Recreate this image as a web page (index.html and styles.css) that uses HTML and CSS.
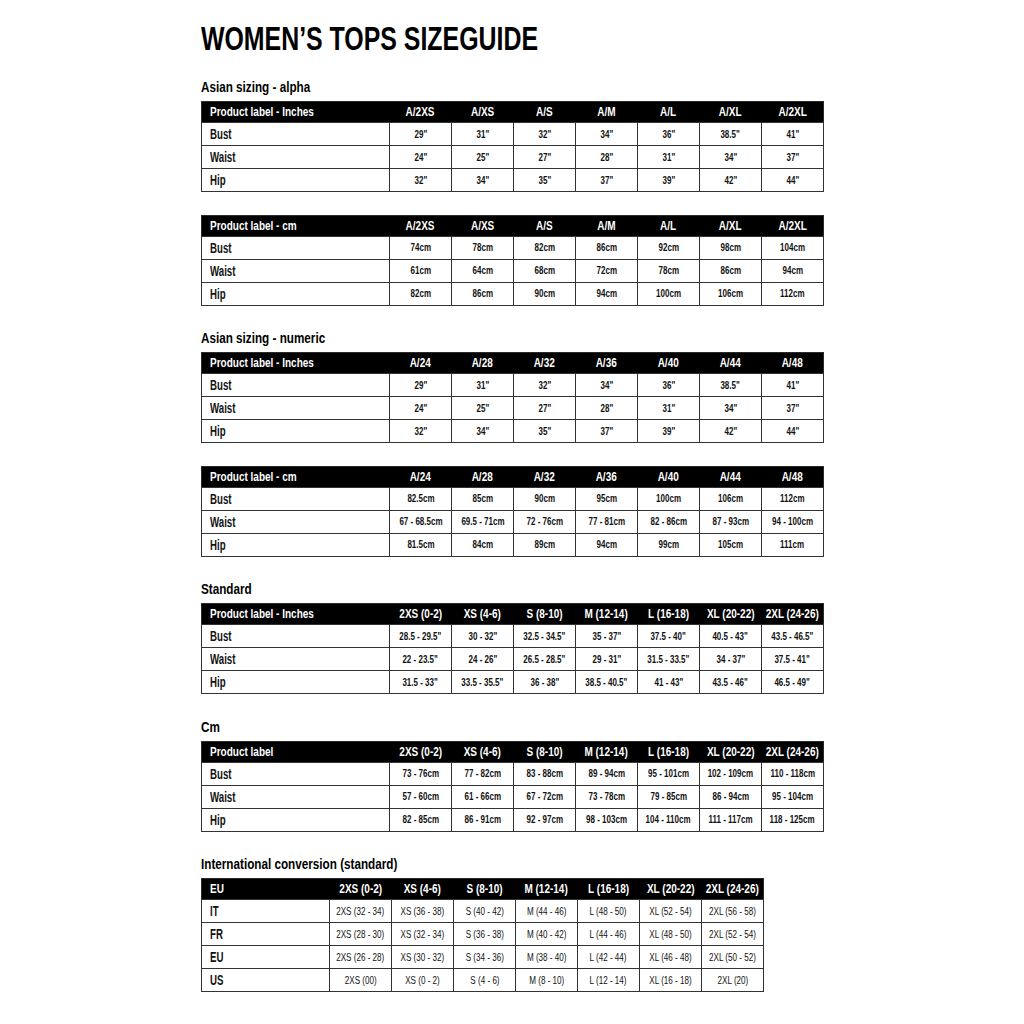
FILE: index.html
```html
<!DOCTYPE html>
<html>
<head>
<meta charset="utf-8">
<link rel="stylesheet" href="styles.css">
</head>
<body>
<div class="page">
  <h1 class="title"><span>WOMEN’S TOPS SIZEGUIDE</span></h1>

  <h2 class="section first"><span>Asian sizing - alpha</span></h2>
  <table class="chart">
    <tr class="head"><th class="label"><span>Product label - Inches</span></th><th><span>A/2XS</span></th><th><span>A/XS</span></th><th><span>A/S</span></th><th><span>A/M</span></th><th><span>A/L</span></th><th><span>A/XL</span></th><th><span>A/2XL</span></th></tr>
    <tr><td class="label"><span>Bust</span></td><td><span>29"</span></td><td><span>31"</span></td><td><span>32"</span></td><td><span>34"</span></td><td><span>36"</span></td><td><span>38.5"</span></td><td><span>41"</span></td></tr>
    <tr><td class="label"><span>Waist</span></td><td><span>24"</span></td><td><span>25"</span></td><td><span>27"</span></td><td><span>28"</span></td><td><span>31"</span></td><td><span>34"</span></td><td><span>37"</span></td></tr>
    <tr><td class="label"><span>Hip</span></td><td><span>32"</span></td><td><span>34"</span></td><td><span>35"</span></td><td><span>37"</span></td><td><span>39"</span></td><td><span>42"</span></td><td><span>44"</span></td></tr>
  </table>
  <table class="chart spaced">
    <tr class="head"><th class="label"><span>Product label - cm</span></th><th><span>A/2XS</span></th><th><span>A/XS</span></th><th><span>A/S</span></th><th><span>A/M</span></th><th><span>A/L</span></th><th><span>A/XL</span></th><th><span>A/2XL</span></th></tr>
    <tr><td class="label"><span>Bust</span></td><td><span>74cm</span></td><td><span>78cm</span></td><td><span>82cm</span></td><td><span>86cm</span></td><td><span>92cm</span></td><td><span>98cm</span></td><td><span>104cm</span></td></tr>
    <tr><td class="label"><span>Waist</span></td><td><span>61cm</span></td><td><span>64cm</span></td><td><span>68cm</span></td><td><span>72cm</span></td><td><span>78cm</span></td><td><span>86cm</span></td><td><span>94cm</span></td></tr>
    <tr><td class="label"><span>Hip</span></td><td><span>82cm</span></td><td><span>86cm</span></td><td><span>90cm</span></td><td><span>94cm</span></td><td><span>100cm</span></td><td><span>106cm</span></td><td><span>112cm</span></td></tr>
  </table>

  <h2 class="section"><span>Asian sizing - numeric</span></h2>
  <table class="chart">
    <tr class="head"><th class="label"><span>Product label - Inches</span></th><th><span>A/24</span></th><th><span>A/28</span></th><th><span>A/32</span></th><th><span>A/36</span></th><th><span>A/40</span></th><th><span>A/44</span></th><th><span>A/48</span></th></tr>
    <tr><td class="label"><span>Bust</span></td><td><span>29"</span></td><td><span>31"</span></td><td><span>32"</span></td><td><span>34"</span></td><td><span>36"</span></td><td><span>38.5"</span></td><td><span>41"</span></td></tr>
    <tr><td class="label"><span>Waist</span></td><td><span>24"</span></td><td><span>25"</span></td><td><span>27"</span></td><td><span>28"</span></td><td><span>31"</span></td><td><span>34"</span></td><td><span>37"</span></td></tr>
    <tr><td class="label"><span>Hip</span></td><td><span>32"</span></td><td><span>34"</span></td><td><span>35"</span></td><td><span>37"</span></td><td><span>39"</span></td><td><span>42"</span></td><td><span>44"</span></td></tr>
  </table>
  <table class="chart spaced">
    <tr class="head"><th class="label"><span>Product label - cm</span></th><th><span>A/24</span></th><th><span>A/28</span></th><th><span>A/32</span></th><th><span>A/36</span></th><th><span>A/40</span></th><th><span>A/44</span></th><th><span>A/48</span></th></tr>
    <tr><td class="label"><span>Bust</span></td><td><span>82.5cm</span></td><td><span>85cm</span></td><td><span>90cm</span></td><td><span>95cm</span></td><td><span>100cm</span></td><td><span>106cm</span></td><td><span>112cm</span></td></tr>
    <tr><td class="label"><span>Waist</span></td><td><span>67 - 68.5cm</span></td><td><span>69.5 - 71cm</span></td><td><span>72 - 76cm</span></td><td><span>77 - 81cm</span></td><td><span>82 - 86cm</span></td><td><span>87 - 93cm</span></td><td><span>94 - 100cm</span></td></tr>
    <tr><td class="label"><span>Hip</span></td><td><span>81.5cm</span></td><td><span>84cm</span></td><td><span>89cm</span></td><td><span>94cm</span></td><td><span>99cm</span></td><td><span>105cm</span></td><td><span>111cm</span></td></tr>
  </table>

  <h2 class="section"><span>Standard</span></h2>
  <table class="chart">
    <tr class="head"><th class="label"><span>Product label - Inches</span></th><th><span>2XS (0-2)</span></th><th><span>XS (4-6)</span></th><th><span>S (8-10)</span></th><th><span>M (12-14)</span></th><th><span>L (16-18)</span></th><th><span>XL (20-22)</span></th><th><span>2XL (24-26)</span></th></tr>
    <tr><td class="label"><span>Bust</span></td><td><span>28.5 - 29.5"</span></td><td><span>30 - 32"</span></td><td><span>32.5 - 34.5"</span></td><td><span>35 - 37"</span></td><td><span>37.5 - 40"</span></td><td><span>40.5 - 43"</span></td><td><span>43.5 - 46.5"</span></td></tr>
    <tr><td class="label"><span>Waist</span></td><td><span>22 - 23.5"</span></td><td><span>24 - 26"</span></td><td><span>26.5 - 28.5"</span></td><td><span>29 - 31"</span></td><td><span>31.5 - 33.5"</span></td><td><span>34 - 37"</span></td><td><span>37.5 - 41"</span></td></tr>
    <tr><td class="label"><span>Hip</span></td><td><span>31.5 - 33"</span></td><td><span>33.5 - 35.5"</span></td><td><span>36 - 38"</span></td><td><span>38.5 - 40.5"</span></td><td><span>41 - 43"</span></td><td><span>43.5 - 46"</span></td><td><span>46.5 - 49"</span></td></tr>
  </table>

  <h2 class="section"><span>Cm</span></h2>
  <table class="chart">
    <tr class="head"><th class="label"><span>Product label</span></th><th><span>2XS (0-2)</span></th><th><span>XS (4-6)</span></th><th><span>S (8-10)</span></th><th><span>M (12-14)</span></th><th><span>L (16-18)</span></th><th><span>XL (20-22)</span></th><th><span>2XL (24-26)</span></th></tr>
    <tr><td class="label"><span>Bust</span></td><td><span>73 - 76cm</span></td><td><span>77 - 82cm</span></td><td><span>83 - 88cm</span></td><td><span>89 - 94cm</span></td><td><span>95 - 101cm</span></td><td><span>102 - 109cm</span></td><td><span>110 - 118cm</span></td></tr>
    <tr><td class="label"><span>Waist</span></td><td><span>57 - 60cm</span></td><td><span>61 - 66cm</span></td><td><span>67 - 72cm</span></td><td><span>73 - 78cm</span></td><td><span>79 - 85cm</span></td><td><span>86 - 94cm</span></td><td><span>95 - 104cm</span></td></tr>
    <tr><td class="label"><span>Hip</span></td><td><span>82 - 85cm</span></td><td><span>86 - 91cm</span></td><td><span>92 - 97cm</span></td><td><span>98 - 103cm</span></td><td><span>104 - 110cm</span></td><td><span>111 - 117cm</span></td><td><span>118 - 125cm</span></td></tr>
  </table>

  <h2 class="section"><span>International conversion (standard)</span></h2>
  <table class="chart intl">
    <tr class="head"><th class="label"><span>EU</span></th><th><span>2XS (0-2)</span></th><th><span>XS (4-6)</span></th><th><span>S (8-10)</span></th><th><span>M (12-14)</span></th><th><span>L (16-18)</span></th><th><span>XL (20-22)</span></th><th><span>2XL (24-26)</span></th></tr>
    <tr><td class="label"><span>IT</span></td><td><span>2XS (32 - 34)</span></td><td><span>XS (36 - 38)</span></td><td><span>S (40 - 42)</span></td><td><span>M (44 - 46)</span></td><td><span>L (48 - 50)</span></td><td><span>XL (52 - 54)</span></td><td><span>2XL (56 - 58)</span></td></tr>
    <tr><td class="label"><span>FR</span></td><td><span>2XS (28 - 30)</span></td><td><span>XS (32 - 34)</span></td><td><span>S (36 - 38)</span></td><td><span>M (40 - 42)</span></td><td><span>L (44 - 46)</span></td><td><span>XL (48 - 50)</span></td><td><span>2XL (52 - 54)</span></td></tr>
    <tr><td class="label"><span>EU</span></td><td><span>2XS (26 - 28)</span></td><td><span>XS (30 - 32)</span></td><td><span>S (34 - 36)</span></td><td><span>M (38 - 40)</span></td><td><span>L (42 - 44)</span></td><td><span>XL (46 - 48)</span></td><td><span>2XL (50 - 52)</span></td></tr>
    <tr><td class="label"><span>US</span></td><td><span>2XS (00)</span></td><td><span>XS (0 - 2)</span></td><td><span>S (4 - 6)</span></td><td><span>M (8 - 10)</span></td><td><span>L (12 - 14)</span></td><td><span>XL (16 - 18)</span></td><td><span>2XL (20)</span></td></tr>
  </table>
</div>
</body>
</html>
```
FILE: styles.css
```css
* { box-sizing: border-box; }
html, body { margin: 0; padding: 0; background: #fff; }
body {
  font-family: "Liberation Sans", Arial, sans-serif;
  color: #111;
}
.page {
  width: 622px;
  margin: 0 auto;
  padding-top: 19px;
}
/* condensed look: each text run is squeezed horizontally */
.title span, .section span, .chart span {
  display: inline-block;
  white-space: nowrap;
}
.title {
  margin: 0;
  font-size: 33.5px;
  line-height: 40px;
  font-weight: bold;
  color: #000;
}
.title span { transform: scaleX(0.743); transform-origin: left center; }
.section {
  margin: 22.5px 0 4px;
  font-size: 15px;
  line-height: 20px;
  font-weight: bold;
  color: #000;
}
.section.first { margin-top: 18px; }
.section span { transform: scaleX(0.78); transform-origin: left center; }
.chart {
  border-collapse: collapse;
  table-layout: fixed;
  width: 622px;
  border: 1px solid #2a2a2a;
}
.chart.spaced { margin-top: 22.5px; }
.chart.intl { width: 560px; }
.chart th, .chart td {
  width: 62px;
  padding: 0;
  text-align: center;
  white-space: nowrap;
  overflow: hidden;
}
.chart th.label, .chart td.label {
  width: 188px;
  text-align: left;
  padding-left: 8px;
}
.chart.intl th.label, .chart.intl td.label { width: 128px; }
.chart th span, .chart td span {
  margin: 0 -40px;
  transform-origin: center center;
}
.chart .label span {
  margin: 0;
  transform-origin: left center;
}
.head { background: #000; color: #fff; }
.head th {
  height: 21px;
  font-size: 12.5px;
  font-weight: bold;
}
.head th span { transform: scaleX(0.8); }
.chart td {
  height: 23px;
  border: 1px solid #333;
  font-size: 10px;
  font-weight: bold;
}
.chart td span { transform: scaleX(0.8); }
.chart td.label { font-size: 14px; }
.chart td.label span { transform: scaleX(0.69); }
.chart.intl td { font-weight: normal; font-size: 10.5px; }
.chart.intl td span { transform: scaleX(0.77); }
.chart.intl td.label { font-weight: bold; font-size: 14px; }
.chart.intl td.label span { transform: scaleX(0.69); }
```
